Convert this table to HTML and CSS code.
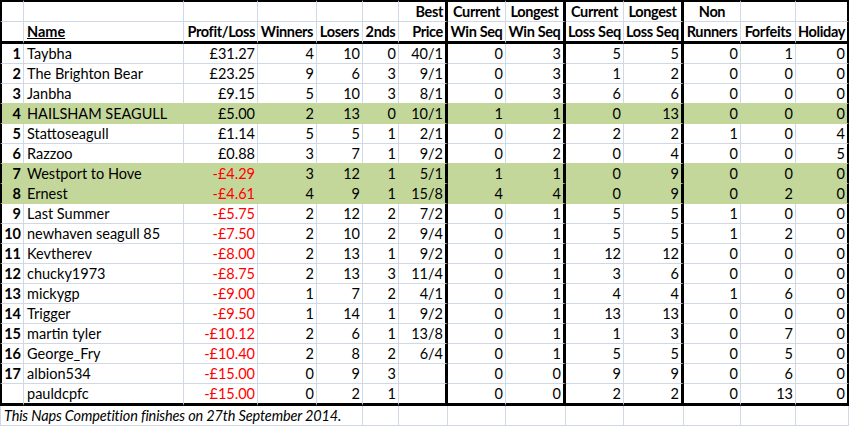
FILE: index.html
```html
<!DOCTYPE html>
<html>
<head>
<meta charset="utf-8">
<title>Naps Competition</title>
<link rel="stylesheet" href="styles.css">
</head>
<body>
<table class="sheet">
<colgroup>
<col class="w1"><col class="w2"><col class="w3"><col class="w4"><col class="w5"><col class="w6"><col class="w7"><col class="w8"><col class="w9"><col class="w10"><col class="w11"><col class="w12"><col class="w13"><col class="w14">
</colgroup>
<thead>
<tr class="h1">
<td class="c1"></td><td class="c2"></td><td class="c3"></td><td class="c4"></td><td class="c5"></td><td class="c6"></td>
<td class="c7 r">Best</td><td class="c8 m">Current</td><td class="c9 m">Longest</td><td class="c10 m">Current</td><td class="c11 m">Longest</td><td class="c12 m">Non</td><td class="c13"></td><td class="c14"></td>
</tr>
<tr class="h2">
<td class="c1"></td><td class="c2 name">Name</td><td class="c3 r">Profit/Loss</td><td class="c4 m">Winners</td><td class="c5 m">Losers</td><td class="c6 m">2nds</td>
<td class="c7 r">Price</td><td class="c8 m">Win Seq</td><td class="c9 m">Win Seq</td><td class="c10 m">Loss Seq</td><td class="c11 m">Loss Seq</td><td class="c12 m">Runners</td><td class="c13 m">Forfeits</td><td class="c14 m">Holiday</td>
</tr>
</thead>
<tbody>
<tr><td class="c1">1</td><td class="c2">Taybha</td><td class="c3">£31.27</td><td class="c4">4</td><td class="c5">10</td><td class="c6">0</td><td class="c7">40/1</td><td class="c8">0</td><td class="c9">3</td><td class="c10">5</td><td class="c11">5</td><td class="c12">0</td><td class="c13">1</td><td class="c14">0</td></tr>
<tr><td class="c1">2</td><td class="c2">The Brighton Bear</td><td class="c3">£23.25</td><td class="c4">9</td><td class="c5">6</td><td class="c6">3</td><td class="c7">9/1</td><td class="c8">0</td><td class="c9">3</td><td class="c10">1</td><td class="c11">2</td><td class="c12">0</td><td class="c13">0</td><td class="c14">0</td></tr>
<tr class="pre"><td class="c1">3</td><td class="c2">Janbha</td><td class="c3">£9.15</td><td class="c4">5</td><td class="c5">10</td><td class="c6">3</td><td class="c7">8/1</td><td class="c8">0</td><td class="c9">3</td><td class="c10">6</td><td class="c11">6</td><td class="c12">0</td><td class="c13">0</td><td class="c14">0</td></tr>
<tr class="green"><td class="c1">4</td><td class="c2">HAILSHAM SEAGULL</td><td class="c3">£5.00</td><td class="c4">2</td><td class="c5">13</td><td class="c6">0</td><td class="c7">10/1</td><td class="c8">1</td><td class="c9">1</td><td class="c10">0</td><td class="c11">13</td><td class="c12">0</td><td class="c13">0</td><td class="c14">0</td></tr>
<tr><td class="c1">5</td><td class="c2">Stattoseagull</td><td class="c3">£1.14</td><td class="c4">5</td><td class="c5">5</td><td class="c6">1</td><td class="c7">2/1</td><td class="c8">0</td><td class="c9">2</td><td class="c10">2</td><td class="c11">2</td><td class="c12">1</td><td class="c13">0</td><td class="c14">4</td></tr>
<tr class="pre"><td class="c1">6</td><td class="c2">Razzoo</td><td class="c3">£0.88</td><td class="c4">3</td><td class="c5">7</td><td class="c6">1</td><td class="c7">9/2</td><td class="c8">0</td><td class="c9">2</td><td class="c10">0</td><td class="c11">4</td><td class="c12">0</td><td class="c13">0</td><td class="c14">5</td></tr>
<tr class="green"><td class="c1">7</td><td class="c2">Westport to Hove</td><td class="c3 neg">-£4.29</td><td class="c4">3</td><td class="c5">12</td><td class="c6">1</td><td class="c7">5/1</td><td class="c8">1</td><td class="c9">1</td><td class="c10">0</td><td class="c11">9</td><td class="c12">0</td><td class="c13">0</td><td class="c14">0</td></tr>
<tr class="green"><td class="c1">8</td><td class="c2">Ernest</td><td class="c3 neg">-£4.61</td><td class="c4">4</td><td class="c5">9</td><td class="c6">1</td><td class="c7">15/8</td><td class="c8">4</td><td class="c9">4</td><td class="c10">0</td><td class="c11">9</td><td class="c12">0</td><td class="c13">2</td><td class="c14">0</td></tr>
<tr><td class="c1">9</td><td class="c2">Last Summer</td><td class="c3 neg">-£5.75</td><td class="c4">2</td><td class="c5">12</td><td class="c6">2</td><td class="c7">7/2</td><td class="c8">0</td><td class="c9">1</td><td class="c10">5</td><td class="c11">5</td><td class="c12">1</td><td class="c13">0</td><td class="c14">0</td></tr>
<tr><td class="c1">10</td><td class="c2">newhaven seagull 85</td><td class="c3 neg">-£7.50</td><td class="c4">2</td><td class="c5">10</td><td class="c6">2</td><td class="c7">9/4</td><td class="c8">0</td><td class="c9">1</td><td class="c10">5</td><td class="c11">5</td><td class="c12">1</td><td class="c13">2</td><td class="c14">0</td></tr>
<tr><td class="c1">11</td><td class="c2">Kevtherev</td><td class="c3 neg">-£8.00</td><td class="c4">2</td><td class="c5">13</td><td class="c6">1</td><td class="c7">9/2</td><td class="c8">0</td><td class="c9">1</td><td class="c10">12</td><td class="c11">12</td><td class="c12">0</td><td class="c13">0</td><td class="c14">0</td></tr>
<tr><td class="c1">12</td><td class="c2">chucky1973</td><td class="c3 neg">-£8.75</td><td class="c4">2</td><td class="c5">13</td><td class="c6">3</td><td class="c7">11/4</td><td class="c8">0</td><td class="c9">1</td><td class="c10">3</td><td class="c11">6</td><td class="c12">0</td><td class="c13">0</td><td class="c14">0</td></tr>
<tr><td class="c1">13</td><td class="c2">mickygp</td><td class="c3 neg">-£9.00</td><td class="c4">1</td><td class="c5">7</td><td class="c6">2</td><td class="c7">4/1</td><td class="c8">0</td><td class="c9">1</td><td class="c10">4</td><td class="c11">4</td><td class="c12">1</td><td class="c13">6</td><td class="c14">0</td></tr>
<tr><td class="c1">14</td><td class="c2">Trigger</td><td class="c3 neg">-£9.50</td><td class="c4">1</td><td class="c5">14</td><td class="c6">1</td><td class="c7">9/2</td><td class="c8">0</td><td class="c9">1</td><td class="c10">13</td><td class="c11">13</td><td class="c12">0</td><td class="c13">0</td><td class="c14">0</td></tr>
<tr><td class="c1">15</td><td class="c2">martin tyler</td><td class="c3 neg">-£10.12</td><td class="c4">2</td><td class="c5">6</td><td class="c6">1</td><td class="c7">13/8</td><td class="c8">0</td><td class="c9">1</td><td class="c10">1</td><td class="c11">3</td><td class="c12">0</td><td class="c13">7</td><td class="c14">0</td></tr>
<tr><td class="c1">16</td><td class="c2">George_Fry</td><td class="c3 neg">-£10.40</td><td class="c4">2</td><td class="c5">8</td><td class="c6">2</td><td class="c7">6/4</td><td class="c8">0</td><td class="c9">1</td><td class="c10">5</td><td class="c11">5</td><td class="c12">0</td><td class="c13">5</td><td class="c14">0</td></tr>
<tr><td class="c1">17</td><td class="c2">albion534</td><td class="c3 neg">-£15.00</td><td class="c4">0</td><td class="c5">9</td><td class="c6">3</td><td class="c7"></td><td class="c8">0</td><td class="c9">0</td><td class="c10">9</td><td class="c11">9</td><td class="c12">0</td><td class="c13">6</td><td class="c14">0</td></tr>
<tr class="last"><td class="c1"></td><td class="c2">pauldcpfc</td><td class="c3 neg">-£15.00</td><td class="c4">0</td><td class="c5">2</td><td class="c6">1</td><td class="c7"></td><td class="c8">0</td><td class="c9">0</td><td class="c10">2</td><td class="c11">2</td><td class="c12">0</td><td class="c13">13</td><td class="c14">0</td></tr>
<tr class="foot"><td class="note" colspan="5">This Naps Competition finishes on 27th September 2014.</td><td></td><td></td><td></td><td></td><td></td><td></td><td></td><td></td><td></td></tr>
</tbody>
</table>
</body>
</html>
```
FILE: styles.css
```css
html, body {
  margin: 0;
  padding: 0;
  background: #ffffff;
}
.sheet {
  border-collapse: separate;
  border-spacing: 0;
  table-layout: fixed;
  width: 849px;
  font-family: Lato, "Open Sans", sans-serif;
  font-size: 14.5px;
  color: #000;
}
.w1 { width: 24px; }
.w2 { width: 160px; }
.w3 { width: 74px; }
.w4 { width: 59px; }
.w5 { width: 46px; }
.w6 { width: 36px; }
.w7 { width: 49px; }
.w8 { width: 58px; }
.w9 { width: 60px; }
.w10 { width: 58px; }
.w11 { width: 60px; }
.w12 { width: 57px; }
.w13 { width: 55px; }
.w14 { width: 53px; }

.sheet td {
  border-right: 1px solid #d0d7e5;
  border-bottom: 1px solid #d0d7e5;
  padding: 0 2px 1px 2px;
  white-space: nowrap;
  text-align: right;
  vertical-align: bottom;
  line-height: 17px;
}
.sheet td.c2 { text-align: left; padding-left: 3px; }
.sheet td.c1 {
  border-left: 2px solid #000;
  font-weight: 700;
  padding-right: 2px;
}
.sheet td.c7, .sheet td.c9, .sheet td.c11 { border-right: 3px solid #000; }
.sheet td.c14 { border-right: 2px solid #000; }

.sheet tbody tr { height: 20px; }
.sheet thead tr { height: 22px; }
.sheet thead td { font-weight: 700; letter-spacing: -0.35px; }
.h1 td { border-top: 2px solid #000; }
.h2 td { border-bottom: 3px solid #000 !important; }
.sheet td.m { text-align: center; padding: 0 0 1px 0; }
.sheet td.r { text-align: right; }
.sheet td.name { text-decoration: underline; text-align: left; letter-spacing: 0; }

.neg { color: #ff0000; }

.green td {
  background: #c4d79b;
  border-bottom-color: #c4d79b;
  border-right-color: #c4d79b;
}
.green td.c7, .green td.c9, .green td.c11, .green td.c14 { border-right-color: #000; }
.pre td { border-bottom-color: #c4d79b; }

.sheet tr.last { height: 22px; }
.last td { border-bottom: 3px solid #000; }

.foot td { border-right: 1px solid #d0d7e5; }
.sheet td.note {
  border-left: 1px solid #d0d7e5;
  text-align: left;
  font-style: italic;
  padding-left: 3px;
  letter-spacing: -0.15px;
}
```
